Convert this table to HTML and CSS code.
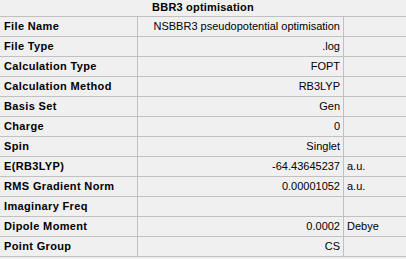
FILE: index.html
```html
<!DOCTYPE html>
<html>
<head>
<meta charset="utf-8">
<link rel="stylesheet" href="styles.css">
</head>
<body>
<div class="title">BBR3 optimisation</div>
<div class="grid">
  <div class="k">File Name</div><div class="v">NSBBR3 pseudopotential optimisation</div><div class="u"></div>
  <div class="k">File Type</div><div class="v">.log</div><div class="u"></div>
  <div class="k">Calculation Type</div><div class="v">FOPT</div><div class="u"></div>
  <div class="k">Calculation Method</div><div class="v">RB3LYP</div><div class="u"></div>
  <div class="k">Basis Set</div><div class="v">Gen</div><div class="u"></div>
  <div class="k">Charge</div><div class="v">0</div><div class="u"></div>
  <div class="k">Spin</div><div class="v">Singlet</div><div class="u"></div>
  <div class="k">E(RB3LYP)</div><div class="v">-64.43645237</div><div class="u">a.u.</div>
  <div class="k">RMS Gradient Norm</div><div class="v">0.00001052</div><div class="u">a.u.</div>
  <div class="k">Imaginary Freq</div><div class="v"></div><div class="u"></div>
  <div class="k">Dipole Moment</div><div class="v">0.0002</div><div class="u">Debye</div>
  <div class="k">Point Group</div><div class="v">CS</div><div class="u"></div>
</div>
</body>
</html>
```
FILE: styles.css
```css
html, body {
  margin: 0;
  padding: 0;
  background: #f0f0f0;
}
body {
  width: 406px;
  height: 259px;
  overflow: hidden;
  font-family: "Liberation Sans", Arial, sans-serif;
  font-size: 11px;
  color: #000;
}
.title {
  height: 16px;
  line-height: 14px;
  text-align: center;
  font-weight: bold;
  letter-spacing: 0.2px;
}
.grid {
  display: grid;
  grid-template-columns: 137px 205px 62px;
  grid-auto-rows: 19px;
  gap: 1px;
  padding: 1px 0;
  background: #c0c0c0;
}
.grid > div {
  background: #f0f0f0;
  line-height: 19px;
  white-space: nowrap;
  overflow: hidden;
}
.k {
  font-weight: bold;
  padding-left: 4px;
  letter-spacing: 0.35px;
}
.v {
  text-align: right;
  padding-right: 3px;
}
.u {
  padding-left: 3px;
}
```
